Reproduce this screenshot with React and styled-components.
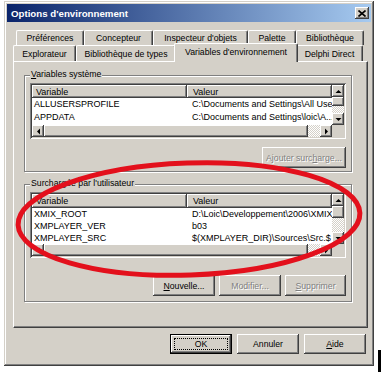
import React from 'react';
import styled, { createGlobalStyle } from 'styled-components';

const FACE = '#d4d0c8';
const SHADOW = '#808080';
const DARK = '#404040';
const FONT = '"Liberation Sans", Arial, sans-serif';

const RAISED = `inset -1px -1px ${DARK}, inset 1px 1px #fff, inset -2px -2px ${SHADOW}, inset 2px 2px ${FACE}`;

const Global = createGlobalStyle`
  html, body { margin: 0; padding: 0; background: #fff; overflow: hidden; }
  #root { width: 381px; height: 372px; }
`;

const Page = styled.div`
  position: relative;
  display: flex;
  width: 381px;
  height: 372px;
  font-family: ${FONT};
  font-size: 8.7px;
  color: #000;
`;

const Window = styled.div`
  box-sizing: border-box;
  flex: none;
  width: 370px;
  height: 365px;
  margin: 1px 0 0 4px;
  padding: 3px;
  background: ${FACE};
  box-shadow: inset -1px -1px ${DARK}, inset 1px 1px ${FACE}, inset -2px -2px ${SHADOW}, inset 2px 2px #fff;
  display: flex;
  flex-direction: column;
`;

const TitleBar = styled.div`
  flex: none;
  height: 18px;
  display: flex;
  align-items: center;
  justify-content: space-between;
  padding: 0 2px 0 4px;
  background: linear-gradient(to right, #0a246a, #a6caf0);
  color: #fff;
  font-weight: bold;
  font-size: 9.7px;
  white-space: nowrap;
`;

const CloseButton = styled.div`
  width: 14px;
  height: 12px;
  background: ${FACE};
  box-shadow: ${RAISED};
  display: flex;
  align-items: center;
  justify-content: center;
`;

const TabRow = styled.div`
  flex: none;
  display: flex;
  align-items: flex-end;
  height: ${p => p.$h}px;
  margin-left: ${p => p.$ml}px;
  margin-top: ${p => p.$mt || 0}px;
`;

const Tab = styled.div`
  box-sizing: border-box;
  flex: none;
  width: ${p => p.$w}px;
  height: 100%;
  display: flex;
  align-items: center;
  justify-content: center;
  background: ${FACE};
  border-top: 1px solid #fff;
  border-left: 1px solid #fff;
  border-right: 1px solid ${DARK};
  box-shadow: inset -1px 0 ${SHADOW};
  border-radius: 2px 2px 0 0;
  white-space: nowrap;
`;

const ActiveTab = styled(Tab)`
  position: relative;
  z-index: 1;
  height: 19px;
  margin: 0 -2px -1px;
  padding-bottom: 3px;
`;

const Panel = styled.div`
  box-sizing: border-box;
  flex: none;
  width: 355px;
  height: 267px;
  margin-left: 6px;
  border-top: 1px solid #fff;
  border-left: 1px solid #fff;
  border-right: 1px solid ${DARK};
  border-bottom: 1px solid ${DARK};
  box-shadow: inset -1px -1px ${SHADOW};
  padding: 13px 0 0 10px;
  display: flex;
  flex-direction: column;
  gap: 12px;
`;

const Group = styled.div`
  position: relative;
  box-sizing: border-box;
  flex: none;
  width: 328px;
  height: ${p => p.$h}px;
  border: 1px solid ${SHADOW};
  box-shadow: inset 1px 1px #fff, 1px 1px #fff;
  padding: 7px 5px 0 5px;
  display: flex;
  flex-direction: column;
`;

const GroupLabel = styled.div`
  position: absolute;
  top: -7px;
  left: 5px;
  padding: 0 1px;
  line-height: 11px;
  background: ${FACE};
  white-space: nowrap;
`;

const U = styled.span`
  text-decoration: underline;
`;

const ListView = styled.div`
  box-sizing: border-box;
  width: 316px;
  height: ${p => p.$h}px;
  padding: 2px;
  background: ${FACE};
  box-shadow: inset 1px 1px ${SHADOW}, inset -1px -1px #fff, inset 2px 2px ${DARK}, inset -2px -2px ${FACE};
  display: grid;
  grid-template-columns: 1fr 12px;
  grid-template-rows: 1fr 12px;
  font-size: 9px;
`;

const ListMain = styled.div`
  background: #fff;
  overflow: hidden;
  display: flex;
  flex-direction: column;
`;

const HeaderRow = styled.div`
  flex: none;
  display: grid;
  grid-template-columns: 155px 1fr;
  height: ${p => p.$h}px;
`;

const HeaderCell = styled.div`
  background: ${FACE};
  box-shadow: ${RAISED};
  padding-left: ${p => p.$pl}px;
  display: flex;
  align-items: center;
  white-space: nowrap;
  overflow: hidden;
`;

const ListBody = styled.div`
  flex: 1;
  overflow: hidden;
`;

const Row = styled.div`
  display: grid;
  grid-template-columns: 155px 1fr;
  height: ${p => p.$h}px;
  line-height: ${p => p.$h}px;
`;

const Cell = styled.div`
  padding-left: ${p => p.$pl}px;
  white-space: nowrap;
  overflow: hidden;
`;

const VScroll = styled.div`
  display: flex;
  flex-direction: column;
`;

const HScroll = styled.div`
  display: flex;
`;

const ScrollArrow = styled.div`
  flex: none;
  width: 12px;
  height: 12px;
  background: ${FACE};
  box-shadow: ${RAISED};
  display: flex;
  align-items: center;
  justify-content: center;
`;

const Thumb = styled.div`
  flex: none;
  box-sizing: border-box;
  width: ${p => (p.$vertical ? '12px' : `${p.$size}px`)};
  height: ${p => (p.$vertical ? `${p.$size}px` : '12px')};
  background: ${FACE};
  box-shadow: ${RAISED};
`;

const Track = styled.div`
  flex: 1;
  background-color: #fff;
  background-image: conic-gradient(${FACE} 25%, #fff 0 50%, ${FACE} 0 75%, #fff 0);
  background-size: 2px 2px;
`;

const Corner = styled.div`
  background: ${FACE};
`;

const ButtonRow = styled.div`
  display: flex;
  justify-content: flex-end;
  gap: ${p => p.$gap}px;
  margin-top: ${p => p.$mt}px;
`;

const Button = styled.button`
  box-sizing: border-box;
  flex: none;
  width: ${p => p.$w || 62}px;
  height: ${p => p.$h || 21}px;
  padding: 0;
  margin: 0;
  border: ${p => (p.$default ? '1px solid #000' : 'none')};
  background: ${FACE};
  box-shadow: ${RAISED};
  font-family: ${FONT};
  font-size: 8.7px;
  color: ${p => (p.disabled ? SHADOW : '#000')};
  text-shadow: ${p => (p.disabled ? '1px 1px 0 #fff' : 'none')};
  outline: ${p => (p.$default ? '1px dotted #000' : 'none')};
  outline-offset: -5px;
  white-space: nowrap;
`;

const DialogButtons = styled.div`
  display: flex;
  justify-content: flex-end;
  gap: 5px;
  margin-top: 6px;
  padding-right: 5px;
`;

const BlackBar = styled.div`
  flex: none;
  align-self: flex-end;
  width: 4px;
  height: 22px;
  margin-left: 4px;
  background: #000;
`;

const Overlay = styled.svg`
  position: absolute;
  left: 0;
  top: 0;
  pointer-events: none;
`;

const Arrow = ({ dir }) => {
  const pts = {
    up: '0.5,4 3.5,1 6.5,4',
    down: '0.5,1 3.5,4 6.5,1',
    left: '4,0.5 1,3.5 4,6.5',
    right: '1,0.5 4,3.5 1,6.5',
  }[dir];
  const vertical = dir === 'up' || dir === 'down';
  return (
    <svg width={vertical ? 7 : 5} height={vertical ? 5 : 7} viewBox={vertical ? '0 0 7 5' : '0 0 5 7'}>
      <polygon points={pts} fill="#000" />
    </svg>
  );
};

const List = ({ height, rows, thumb, headerH, rowH }) => (
  <ListView $h={height}>
    <ListMain>
      <HeaderRow $h={headerH}>
        <HeaderCell $pl={4}>Variable</HeaderCell>
        <HeaderCell $pl={6}>Valeur</HeaderCell>
      </HeaderRow>
      <ListBody>
        {rows.map(([name, value]) => (
          <Row key={name} $h={rowH}>
            <Cell $pl={2}>{name}</Cell>
            <Cell $pl={5}>{value}</Cell>
          </Row>
        ))}
      </ListBody>
    </ListMain>
    <VScroll>
      <ScrollArrow><Arrow dir="up" /></ScrollArrow>
      <Thumb $vertical $size={thumb} />
      <Track />
      <ScrollArrow><Arrow dir="down" /></ScrollArrow>
    </VScroll>
    <HScroll>
      <ScrollArrow><Arrow dir="left" /></ScrollArrow>
      <Thumb $size={264} />
      <Track />
      <ScrollArrow><Arrow dir="right" /></ScrollArrow>
    </HScroll>
    <Corner />
  </ListView>
);

const systemRows = [
  ['ALLUSERSPROFILE', 'C:\\Documents and Settings\\All Users'],
  ['APPDATA', 'C:\\Documents and Settings\\loic\\A...'],
  ['CommonProgramFiles', 'C:\\Program Files\\Fichiers communs'],
];

const userRows = [
  ['XMIX_ROOT', 'D:\\Loic\\Developpement\\2006\\XMIX'],
  ['XMPLAYER_VER', 'b03'],
  ['XMPLAYER_SRC', '$(XMPLAYER_DIR)\\Sources\\Src.$'],
  ['XMPLAYER_DIR', 'D:\\Loic\\Developpement'],
];

export default function App() {
  return (
    <>
      <Global />
      <Page>
        <Window>
          <TitleBar>
            <span>Options d'environnement</span>
            <CloseButton>
              <svg width="8" height="7" viewBox="0 0 8 7">
                <path d="M0.5 0.5 L7.5 6.5 M7.5 0.5 L0.5 6.5" stroke="#000" strokeWidth="1.6" />
              </svg>
            </CloseButton>
          </TitleBar>
          <TabRow $h={15} $ml={9} $mt={8}>
            <Tab $w={68}>Préférences</Tab>
            <Tab $w={69}>Concepteur</Tab>
            <Tab $w={95}>Inspecteur d'objets</Tab>
            <Tab $w={48}>Palette</Tab>
            <Tab $w={68}>Bibliothèque</Tab>
          </TabRow>
          <TabRow $h={16} $ml={6}>
            <Tab $w={63}>Explorateur</Tab>
            <Tab $w={100}>Bibliothèque de types</Tab>
            <ActiveTab $w={124}>Variables d'environnement</ActiveTab>
            <Tab $w={67}>Delphi Direct</Tab>
          </TabRow>
          <Panel>
            <Group $h={97}>
              <GroupLabel><U>V</U>ariables système</GroupLabel>
              <List height={56} rows={systemRows} thumb={9} headerH={13} rowH={13} />
              <ButtonRow $mt={8} $gap={4}>
                <Button disabled $w={84}>Ajouter surc<U>h</U>arge...</Button>
              </ButtonRow>
            </Group>
            <Group $h={118}>
              <GroupLabel>Surchargée par l'utilisateur</GroupLabel>
              <List height={66} rows={userRows} thumb={12} headerH={14} rowH={12} />
              <ButtonRow $mt={17} $gap={4}>
                <Button><U>N</U>ouvelle...</Button>
                <Button disabled>Modifier...</Button>
                <Button disabled $w={61}><U>S</U>upprimer</Button>
              </ButtonRow>
            </Group>
          </Panel>
          <DialogButtons>
            <Button $default $h={20}>OK</Button>
            <Button $h={20}>Annuler</Button>
            <Button $h={20}><U>A</U>ide</Button>
          </DialogButtons>
        </Window>
        <BlackBar />
        <Overlay width="381" height="372" viewBox="0 0 381 372">
          <ellipse
            cx="189"
            cy="219"
            rx="171"
            ry="56"
            transform="rotate(-2 189 219)"
            fill="none"
            stroke="#e3101c"
            strokeWidth="5"
          />
        </Overlay>
      </Page>
    </>
  );
}
